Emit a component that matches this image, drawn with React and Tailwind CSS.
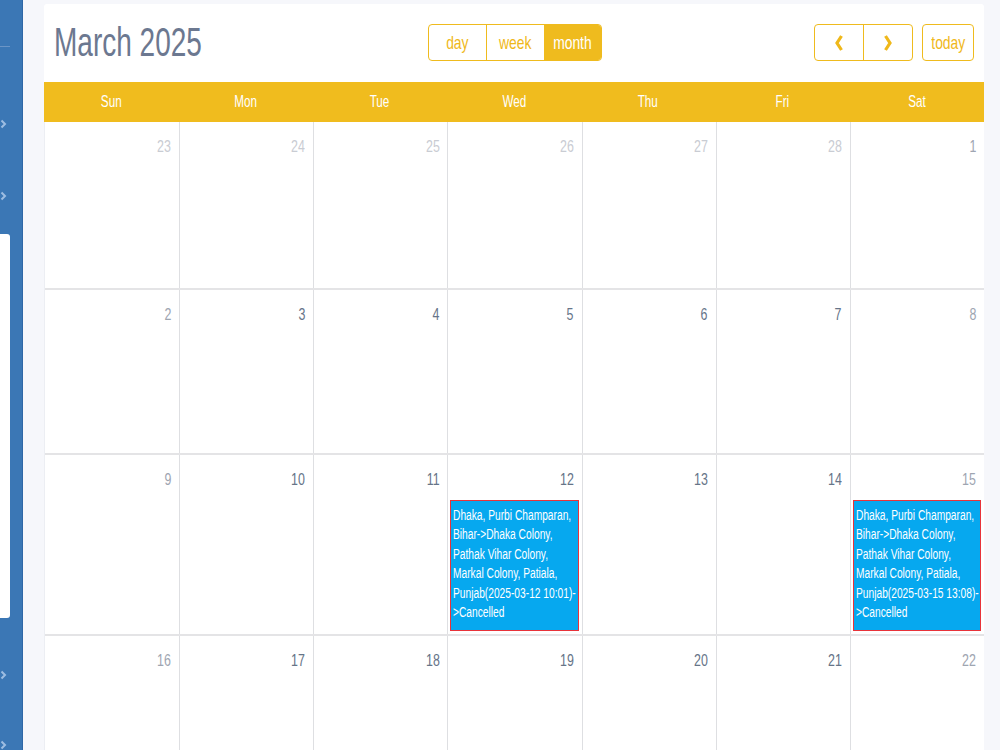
import React from "react";

const FONT = { fontFamily: '"Liberation Sans", Arial, sans-serif' };

// Condensed text: the UI uses a narrow Helvetica-style face, so glyphs are squeezed horizontally.
function N({ children, origin = "center", className = "" }) {
  const o =
    origin === "left" ? "origin-left" : origin === "right" ? "origin-right" : "origin-center";
  return (
    <span className={`inline-block whitespace-nowrap scale-x-[0.73] ${o} ${className}`}>
      {children}
    </span>
  );
}

const days = ["Sun", "Mon", "Tue", "Wed", "Thu", "Fri", "Sat"];

const weeks = [
  [
    { d: 23, o: true }, { d: 24, o: true }, { d: 25, o: true }, { d: 26, o: true },
    { d: 27, o: true }, { d: 28, o: true }, { d: 1 },
  ],
  [{ d: 2 }, { d: 3 }, { d: 4 }, { d: 5 }, { d: 6 }, { d: 7 }, { d: 8 }],
  [
    { d: 9 }, { d: 10 }, { d: 11 },
    { d: 12, ev: "2025-03-12 10:01" },
    { d: 13 }, { d: 14 },
    { d: 15, ev: "2025-03-15 13:08" },
  ],
  [{ d: 16 }, { d: 17 }, { d: 18 }, { d: 19 }, { d: 20 }, { d: 21 }, { d: 22 }],
];

const rowHeights = ["h-[166px]", "h-[165px]", "h-[181px]", "h-[165px]"];

function Chevron({ dir }) {
  return (
    <svg width="10" height="18" viewBox="0 0 10 18" className="block">
      <polyline
        points={dir === "left" ? "7.5,2 3,9 7.5,16" : "2.5,2 7,9 2.5,16"}
        fill="none"
        stroke="#efb81a"
        strokeWidth="3.2"
        strokeLinejoin="miter"
      />
    </svg>
  );
}

function SideChevron() {
  return (
    <svg width="7" height="10" viewBox="0 0 7 10" className="block">
      <polyline points="1.5,1.5 5,5 1.5,8.5" fill="none" stroke="#9dbde2" strokeWidth="2" />
    </svg>
  );
}

function Event({ when }) {
  const lines = [
    "Dhaka, Purbi Champaran,",
    "Bihar->Dhaka Colony,",
    "Pathak Vihar Colony,",
    "Markal Colony, Patiala,",
    `Punjab(${when})-`,
    ">Cancelled",
  ];
  return (
    <div className="mt-[12px] ml-[2px] mr-[3px] h-[131px] shrink-0 overflow-hidden border border-[#e8333a] bg-[#06a8ef] px-[2px] py-[5px]">
      {lines.map((l, i) => (
        <div key={i} className="h-[19.4px] text-[14px] leading-[19.4px] text-white">
          <N origin="left">{l}</N>
        </div>
      ))}
    </div>
  );
}

function dayColor(cell, col) {
  if (cell.o) return "text-[#c9ccd3]";
  if (col === 0 || col === 6) return "text-[#9ea5b1]";
  return "text-[#667488]";
}

export default function App() {
  return (
    <div className="flex h-[750px] w-[1000px] overflow-hidden bg-[#f6f7fb]" style={FONT}>
      {/* left navigation rail */}
      <aside className="flex h-full w-[23px] shrink-0 flex-col border-r border-[#2f67a6] bg-[#3b77b5]">
        <div className="mt-[46px] h-px w-[10px] shrink-0 bg-[#6b95c6]" />
        <div className="mt-[72px] shrink-0"><SideChevron /></div>
        <div className="mt-[62px] shrink-0"><SideChevron /></div>
        <div className="mt-[33px] h-[384px] w-[10px] shrink-0 rounded-r-[3px] bg-white" />
        <div className="mt-[52px] shrink-0"><SideChevron /></div>
        <div className="mt-[60px] shrink-0"><SideChevron /></div>
      </aside>

      {/* calendar card */}
      <main className="ml-[21px] mt-[4px] flex w-[940px] shrink-0 flex-col rounded-t-[3px] bg-white">
        <header className="flex h-[78px] shrink-0 items-start px-[10px] pt-[20px]">
          <h1 className="h-[37px] w-[300px] text-[40px] leading-[37px] text-[#6c7890]">
            <span className="inline-block origin-left scale-x-[0.7] whitespace-nowrap">March 2025</span>
          </h1>
          <div className="ml-[74px] flex h-[37px] overflow-hidden rounded-[4px] border border-[#efbb1e] text-[19px] leading-[35px]">
            <div className="w-[57px] text-center text-[#efb81a]"><N>day</N></div>
            <div className="w-[58px] border-l border-[#efbb1e] text-center text-[#efb81a]"><N>week</N></div>
            <div className="w-[57px] bg-[#efbb1e] text-center text-white"><N>month</N></div>
          </div>
          <div className="ml-auto flex h-[37px] overflow-hidden rounded-[4px] border border-[#efbb1e]">
            <div className="flex w-[48px] items-center justify-center"><Chevron dir="left" /></div>
            <div className="flex w-[49px] items-center justify-center border-l border-[#efbb1e]"><Chevron dir="right" /></div>
          </div>
          <div className="ml-[9px] h-[37px] w-[52px] rounded-[4px] border border-[#efbb1e] text-center text-[19px] leading-[35px] text-[#efb81a]">
            <N>today</N>
          </div>
        </header>

        {/* weekday header */}
        <div className="grid h-[40px] shrink-0 grid-cols-7 bg-[#f0bc1e] text-[16px] leading-[40px] text-white">
          {days.map((d) => (
            <div key={d} className="text-center"><N>{d}</N></div>
          ))}
        </div>

        {/* month grid */}
        <div className="shrink-0 border-l border-[#eceef3]">
          {weeks.map((w, r) => (
            <div
              key={r}
              className={`grid grid-cols-7 ${rowHeights[r]} ${r > 0 ? "border-t-2 border-[#e4e4e6]" : ""}`}
            >
              {w.map((cell, c) => (
                <div
                  key={c}
                  className={`flex flex-col ${c > 0 ? "border-l border-[#dedfe2]" : ""}`}
                >
                  <div className={`shrink-0 pt-[16px] pr-[8px] text-right text-[17px] leading-[17px] ${dayColor(cell, c)}`}>
                    <N origin="right">{cell.d}</N>
                  </div>
                  {cell.ev && <Event when={cell.ev} />}
                </div>
              ))}
            </div>
          ))}
        </div>
      </main>
    </div>
  );
}
